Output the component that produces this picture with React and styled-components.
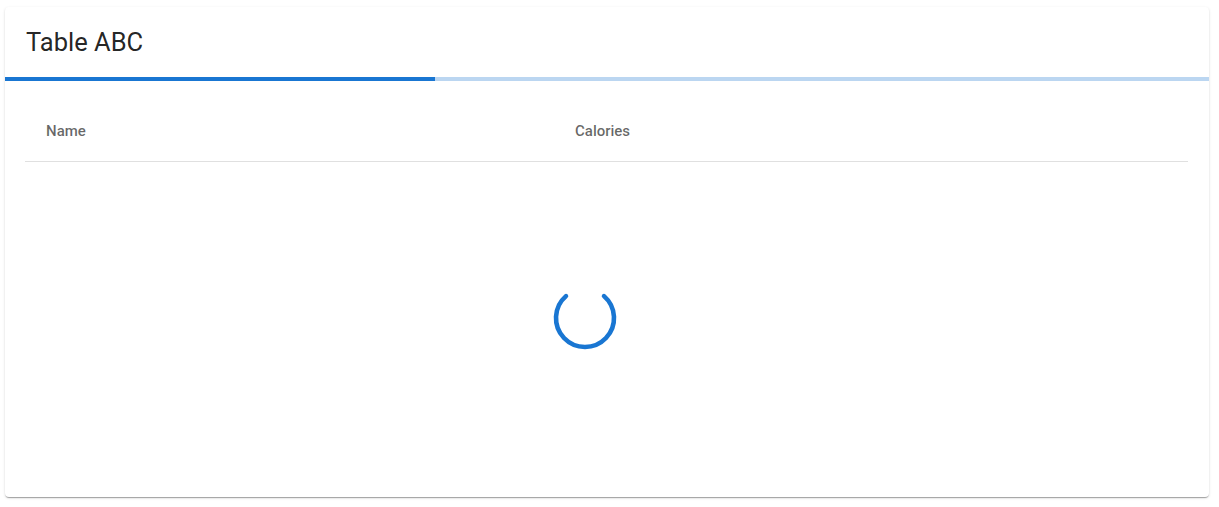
import React from "react";
import styled, { createGlobalStyle } from "styled-components";

const GlobalStyle = createGlobalStyle`
  html, body {
    margin: 0;
    padding: 0;
    background: #ffffff;
    font-family: Roboto, "Liberation Sans", Arial, sans-serif;
  }
`;

const Page = styled.div`
  padding: 7px 10px 10px 5px;
`;

const Card = styled.div`
  background: #fff;
  border-radius: 4px;
  box-shadow: 0px 2px 1px -1px rgba(0, 0, 0, 0.2),
    0px 1px 1px 0px rgba(0, 0, 0, 0.14), 0px 1px 3px 0px rgba(0, 0, 0, 0.12);
  height: 490px;
  display: flex;
  flex-direction: column;
  overflow: hidden;
`;

const CardHeader = styled.div`
  height: 70px;
  padding-left: 21px;
  display: flex;
  align-items: center;
  box-sizing: border-box;
`;

const Title = styled.h5`
  margin: 0;
  font-size: 25.5px;
  font-weight: 400;
  line-height: 32px;
  color: rgba(0, 0, 0, 0.87);
`;

const Progress = styled.div`
  height: 4px;
  background: #bbd6f1;
  display: flex;
`;

const ProgressBar = styled.div`
  background: #1976d2;
  height: 100%;
`;

const TableWrap = styled.div`
  flex: 1;
  padding: 20px 21px 0 20px;
  display: flex;
  flex-direction: column;
`;

const HeadRow = styled.div`
  display: grid;
  grid-template-columns: ${(p) => p.$cols};
  height: 61px;
  border-bottom: 1px solid rgba(224, 224, 224, 1);
  box-sizing: border-box;
`;

const HeadCell = styled.div`
  display: flex;
  align-items: center;
  padding-left: 21px;
  font-size: 15px;
  font-weight: 500;
  color: rgba(0, 0, 0, 0.6);
`;

const Body = styled.div`
  flex: 1;
  display: flex;
  align-items: center;
  justify-content: center;
  padding: 0 44px 23px 0;
`;

const Spinner = styled.svg`
  width: 64px;
  height: 64px;
  display: block;
`;

function Loader() {
  // arc with a gap of ~82deg at the top
  const r = 29;
  const c = 32;
  const a0 = (41 * Math.PI) / 180;
  const a1 = ((360 - 41) * Math.PI) / 180;
  const x0 = c + r * Math.sin(a0);
  const y0 = c - r * Math.cos(a0);
  const x1 = c + r * Math.sin(a1);
  const y1 = c - r * Math.cos(a1);
  return (
    <Spinner viewBox="0 0 64 64">
      <path
        d={`M ${x0} ${y0} A ${r} ${r} 0 1 1 ${x1} ${y1}`}
        fill="none"
        stroke="#1976d2"
        strokeWidth="4.6"
        strokeLinecap="round"
      />
    </Spinner>
  );
}

const columns = [
  { title: "Name", key: "name" },
  { title: "Calories", key: "calories" },
];

export default function App() {
  return (
    <>
      <GlobalStyle />
      <Page>
        <Card>
          <CardHeader>
            <Title>Table ABC</Title>
          </CardHeader>
          <Progress>
            <ProgressBar style={{ width: "430px" }} />
          </Progress>
          <TableWrap>
            <HeadRow $cols="529px 1fr">
              {columns.map((col) => (
                <HeadCell key={col.key}>{col.title}</HeadCell>
              ))}
            </HeadRow>
            <Body>
              <Loader />
            </Body>
          </TableWrap>
        </Card>
      </Page>
    </>
  );
}
